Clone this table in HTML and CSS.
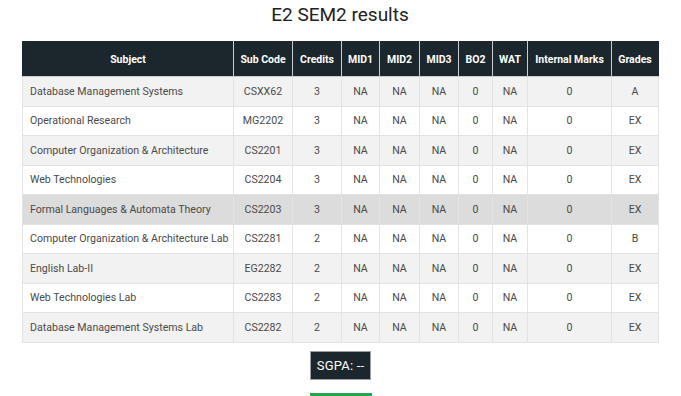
FILE: index.html
```html
<!DOCTYPE html>
<html>
<head>
<meta charset="utf-8">
<link rel="stylesheet" href="styles.css">
</head>
<body>
<main class="page">
  <h1 class="title">E2 SEM2 results</h1>
  <table class="results">
    <colgroup>
      <col class="c-subject"><col class="c-code"><col class="c-credits"><col class="c-mid1"><col class="c-mid2"><col class="c-mid3"><col class="c-bo2"><col class="c-wat"><col class="c-internal"><col class="c-grade">
    </colgroup>
    <thead>
      <tr><th>Subject</th><th>Sub Code</th><th>Credits</th><th>MID1</th><th>MID2</th><th>MID3</th><th>BO2</th><th>WAT</th><th>Internal Marks</th><th>Grades</th></tr>
    </thead>
    <tbody>
      <tr><td class="subj">Database Management Systems</td><td>CSXX62</td><td>3</td><td>NA</td><td>NA</td><td>NA</td><td>0</td><td>NA</td><td>0</td><td>A</td></tr>
      <tr><td class="subj">Operational Research</td><td>MG2202</td><td>3</td><td>NA</td><td>NA</td><td>NA</td><td>0</td><td>NA</td><td>0</td><td>EX</td></tr>
      <tr><td class="subj">Computer Organization &amp; Architecture</td><td>CS2201</td><td>3</td><td>NA</td><td>NA</td><td>NA</td><td>0</td><td>NA</td><td>0</td><td>EX</td></tr>
      <tr><td class="subj">Web Technologies</td><td>CS2204</td><td>3</td><td>NA</td><td>NA</td><td>NA</td><td>0</td><td>NA</td><td>0</td><td>EX</td></tr>
      <tr class="hover"><td class="subj">Formal Languages &amp; Automata Theory</td><td>CS2203</td><td>3</td><td>NA</td><td>NA</td><td>NA</td><td>0</td><td>NA</td><td>0</td><td>EX</td></tr>
      <tr><td class="subj">Computer Organization &amp; Architecture Lab</td><td>CS2281</td><td>2</td><td>NA</td><td>NA</td><td>NA</td><td>0</td><td>NA</td><td>0</td><td>B</td></tr>
      <tr><td class="subj">English Lab-II</td><td>EG2282</td><td>2</td><td>NA</td><td>NA</td><td>NA</td><td>0</td><td>NA</td><td>0</td><td>EX</td></tr>
      <tr><td class="subj">Web Technologies Lab</td><td>CS2283</td><td>2</td><td>NA</td><td>NA</td><td>NA</td><td>0</td><td>NA</td><td>0</td><td>EX</td></tr>
      <tr><td class="subj">Database Management Systems Lab</td><td>CS2282</td><td>2</td><td>NA</td><td>NA</td><td>NA</td><td>0</td><td>NA</td><td>0</td><td>EX</td></tr>
    </tbody>
  </table>
  <div class="sgpa">SGPA: --</div>
  <div class="action"></div>
</main>
</body>
</html>
```

FILE: styles.css
```css
html, body {
  margin: 0;
  padding: 0;
  background: #ffffff;
  overflow: hidden;
}
body {
  font-family: Roboto, "Liberation Sans", Arial, sans-serif;
  color: #444444;
}
.page {
  display: flex;
  flex-direction: column;
  align-items: center;
  width: 681px;
}
.page > * {
  flex-shrink: 0;
}
.title {
  margin: 3px 0 15px 0;
  font-size: 19px;
  font-weight: 400;
  line-height: 23px;
  color: #212121;
  padding-right: 1px;
}
.results {
  align-self: flex-start;
  margin-left: 22px;
  width: 636px;
  table-layout: fixed;
  border-collapse: collapse;
  font-size: 10.6px;
}
.c-subject { width: 211px; }
.c-code { width: 59px; }
.c-credits { width: 49px; }
.c-mid1 { width: 38px; }
.c-mid2 { width: 40px; }
.c-mid3 { width: 39px; }
.c-bo2 { width: 34px; }
.c-wat { width: 35px; }
.c-internal { width: 84px; }
.c-grade { width: 47px; }
.results th {
  height: 34px;
  padding: 0 3px;
  background: #1b262d;
  color: #ffffff;
  font-weight: 700;
  font-size: 10.5px;
  text-align: center;
  border: 1px solid #c9cdd0;
  border-top-color: #1b262d;
  white-space: nowrap;
}
.results th:first-child { border-left-color: #1b262d; }
.results th:last-child { border-right-color: #1b262d; }
.results td {
  height: 28.5px;
  padding: 0 3px;
  text-align: center;
  border: 1px solid #e3e3e3;
  color: #4a4a4a;
  white-space: nowrap;
}
.results td.subj {
  text-align: left;
  padding-left: 7px;
}
.results tbody tr:nth-child(odd) { background: #f2f2f2; }
.results tbody tr:nth-child(even) { background: #ffffff; }
.results tbody tr.hover { background: #dcdcdc; }
.sgpa {
  margin-top: 8px;
  padding: 0 6px;
  height: 29px;
  box-sizing: border-box;
  display: flex;
  align-items: center;
  background: #1b262d;
  border: 1px solid #9aa0a4;
  color: #ffffff;
  font-size: 13px;
  letter-spacing: 0.2px;
}
.action {
  margin-top: 13px;
  width: 62px;
  height: 30px;
  background: #21a84a;
}
```
